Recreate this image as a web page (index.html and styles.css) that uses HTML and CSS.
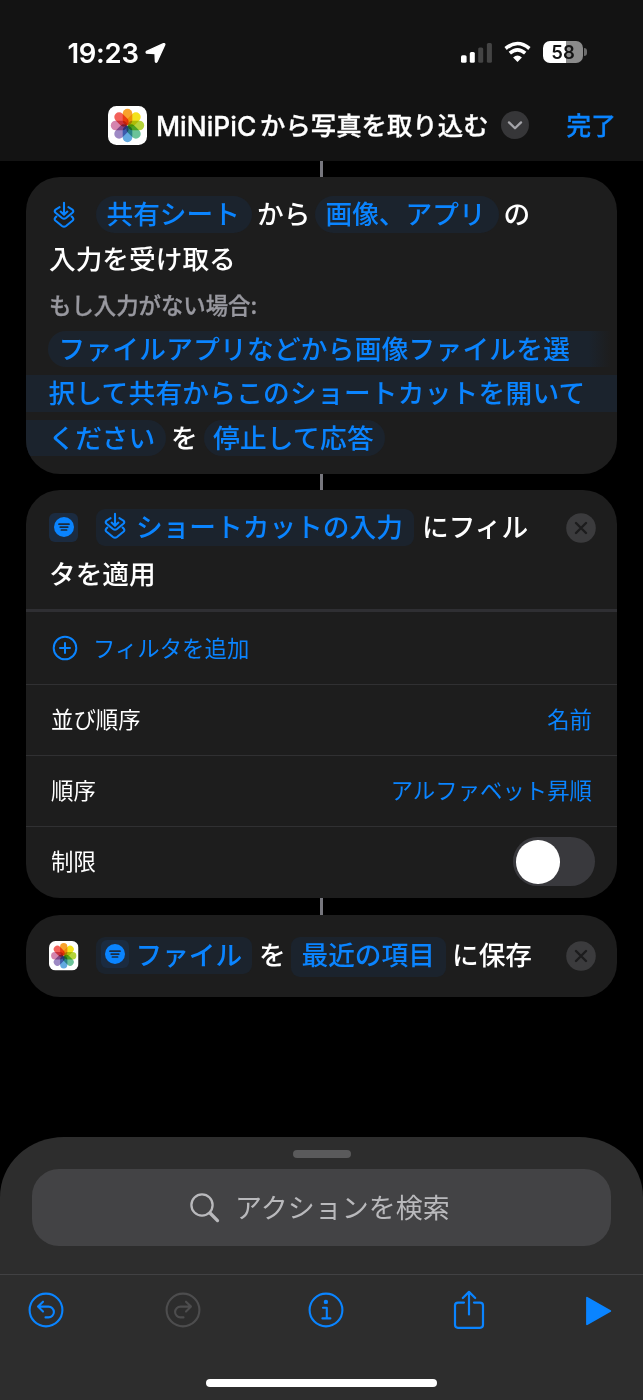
FILE: index.html
```
<!DOCTYPE html>
<html lang="ja">
<head>
<meta charset="utf-8">
<title>MiNiPiCから写真を取り込む</title>
<link rel="stylesheet" href="styles.css">
</head>
<body>
<svg class="defs" aria-hidden="true">
  <symbol id="shortcut" viewBox="0 0 22 28">
    <g fill="none" stroke="currentColor" stroke-width="2.1" stroke-linecap="round" stroke-linejoin="round">
      <path d="M11 1.8V13.4M7.6 10.6L11 13.8L14.4 10.6"/>
      <path d="M6.6 6.2L2.6 8.6Q.8 10.2 2.6 11.8L9 17Q11 18.4 13 17L19.4 11.8Q21.2 10.2 19.4 8.6L15.4 6.2"/>
      <path d="M3.4 15.6L2.4 16.6Q.8 18.2 2.6 19.8L9 25Q11 26.4 13 25L19.4 19.8Q21.2 18.2 19.6 16.6L18.6 15.6"/>
    </g>
  </symbol>
  <symbol id="filter" viewBox="0 0 20 20">
    <circle cx="10" cy="10" r="10" fill="#0a84ff"/>
    <path d="M5 7.2H15M6.2 10.1H13.8M7.4 13H12.6" stroke="#1b2b40" stroke-width="1.7" stroke-linecap="round"/>
  </symbol>
  <symbol id="close" viewBox="0 0 30 30">
    <circle cx="15" cy="15" r="14.8" fill="#3b3b3d"/>
    <path d="M10 10L20 20M20 10L10 20" stroke="#1c1c1d" stroke-width="2.4" stroke-linecap="round"/>
  </symbol>
  <symbol id="photos" viewBox="0 0 39 39">
    <rect width="39" height="39" rx="8.5" fill="#fff"/>
    <g class="petals">
      <rect x="14.7" y="2.8" width="9.6" height="16.4" rx="4.8" fill="#f8a22c"/>
      <rect x="14.7" y="2.8" width="9.6" height="16.4" rx="4.8" fill="#f4e21c" transform="rotate(45 19.5 19.5)"/>
      <rect x="14.7" y="2.8" width="9.6" height="16.4" rx="4.8" fill="#b5d43b" transform="rotate(90 19.5 19.5)"/>
      <rect x="14.7" y="2.8" width="9.6" height="16.4" rx="4.8" fill="#6bc399" transform="rotate(135 19.5 19.5)"/>
      <rect x="14.7" y="2.8" width="9.6" height="16.4" rx="4.8" fill="#62a9e0" transform="rotate(180 19.5 19.5)"/>
      <rect x="14.7" y="2.8" width="9.6" height="16.4" rx="4.8" fill="#9d89c4" transform="rotate(225 19.5 19.5)"/>
      <rect x="14.7" y="2.8" width="9.6" height="16.4" rx="4.8" fill="#d484ae" transform="rotate(270 19.5 19.5)"/>
      <rect x="14.7" y="2.8" width="9.6" height="16.4" rx="4.8" fill="#f2605a" transform="rotate(315 19.5 19.5)"/>
    </g>
  </symbol>
</svg>

<div class="screen">
  <header class="header">
    <div class="status">
      <span class="time">19:23</span>
      <svg class="location" viewBox="0 0 22 22"><path d="M20.2 1.3Q21 1.4 20.7 2.4L12.6 20Q11.6 21.3 10.9 20L10.5 11.6L1.7 11.2Q.6 10.2 1.7 9.3L19.3 1.3Q19.9 1.1 20.2 1.3Z" fill="#fff" stroke="#fff" stroke-width="1.4"/></svg>
      <svg class="signal" viewBox="0 0 32 20">
        <rect x="0" y="12.2" width="5.6" height="7.6" rx="1.6" fill="#fff"/>
        <rect x="8.8" y="9" width="5" height="10.8" rx="1.5" fill="#fff"/>
        <rect x="17.2" y="4.4" width="5" height="15.4" rx="1.5" fill="#444"/>
        <rect x="25.9" y="0" width="5" height="19.8" rx="1.5" fill="#444"/>
      </svg>
      <svg class="wifi" viewBox="0 0 27 20">
        <path d="M1.6 6.5Q13.5 -3.5 25.4 6.5" fill="none" stroke="#fff" stroke-width="3.6"/>
        <path d="M5.8 11.2Q13.5 4.6 21.2 11.2" fill="none" stroke="#fff" stroke-width="3.6"/>
        <path d="M13.5 20L9.1 15.6Q13.5 11.6 17.9 15.6Z" fill="#fff"/>
      </svg>
      <span class="battery">58</span>
      <span class="battery-tip"></span>
    </div>
    <div class="titlebar">
      <svg class="app-icon"><use href="#photos"/></svg>
      <span class="title-latin">MiNiPiC</span><span class="title-text">から写真を取り込む</span>
      <svg class="chevron" viewBox="0 0 28 28"><circle cx="14" cy="14" r="14" fill="#363638"/><path d="M8 11.4L14 17.3L20 11.4" fill="none" stroke="#a5a5aa" stroke-width="2.3" stroke-linecap="round" stroke-linejoin="round"/></svg>
      <span class="done">完了</span>
    </div>
  </header>

  <main class="flow">
    <div class="link"></div>
    <section class="card receive">
      <div class="line first">
        <svg class="glyph"><use href="#shortcut"/></svg>
        <span class="pill source">共有シート</span>
        <span class="word">から</span>
        <span class="pill kinds">画像、アプリ</span>
        <span class="word">の</span>
      </div>
      <div class="line indent">入力を受け取る</div>
      <div class="caption">もし入力がない場合:</div>
      <div class="line"><span class="pill open-end">ファイルアプリなどから画像ファイルを選</span></div>
      <div class="line"><span class="pill band">択して共有からこのショートカットを開いて</span></div>
      <div class="line">
        <span class="pill open-start">ください</span>
        <span class="word wide">を</span>
        <span class="pill answer">停止して応答</span>
      </div>
    </section>
    <div class="link"></div>
    <section class="card filter-card">
      <div class="filter-head">
        <div class="line first">
          <span class="tile"><svg><use href="#filter"/></svg></span>
          <span class="pill square input"><svg class="glyph-small"><use href="#shortcut"/></svg>ショートカットの入力</span>
          <span class="word to">にフィル</span>
          <svg class="close"><use href="#close"/></svg>
        </div>
        <div class="line indent second">タを適用</div>
      </div>
      <div class="row add">
        <svg class="plus" viewBox="0 0 26 26"><g fill="none" stroke="#0a84ff" stroke-width="2" stroke-linecap="round"><circle cx="13" cy="13" r="11.3"/><path d="M13 8V18M8 13H18"/></g></svg>
        <span class="label">フィルタを追加</span>
      </div>
      <div class="row"><span class="label">並び順序</span><span class="label value">名前</span></div>
      <div class="row"><span class="label">順序</span><span class="label value">アルファベット昇順</span></div>
      <div class="row limit"><span class="label">制限</span><span class="toggle"><span class="knob"></span></span></div>
    </section>
    <div class="link last"></div>
    <section class="card save">
      <div class="line first">
        <svg class="photo-small"><use href="#photos"/></svg>
        <span class="pill square file"><span class="tile inner"><svg><use href="#filter"/></svg></span>ファイル</span>
        <span class="word obj">を</span>
        <span class="pill square tall">最近の項目</span>
        <span class="word dest">に保存</span>
        <svg class="close"><use href="#close"/></svg>
      </div>
    </section>
  </main>

  <footer class="sheet">
    <div class="handle"></div>
    <div class="search">
      <svg class="lens" viewBox="0 0 30 30"><g fill="none" stroke="#b9b9bc"><circle cx="12" cy="12" r="10.6" stroke-width="2.3"/><path d="M20 20L27.5 27.6" stroke-width="3.3" stroke-linecap="round"/></g></svg>
      <span class="placeholder">アクションを検索</span>
    </div>
    <div class="toolbar">
      <svg class="tool undo" viewBox="0 0 36 36"><g fill="none" stroke="#0a84ff" stroke-width="2.1" stroke-linecap="round" stroke-linejoin="round"><circle cx="18" cy="18" r="16.4"/><path d="M15 9.7L10 14.6L15 19.6M10 14.6H20.5A5.4 5.4 0 0 1 20.5 25.4H17.5"/></g></svg>
      <svg class="tool redo" viewBox="0 0 36 36"><g fill="none" stroke="#4d4d4e" stroke-width="2.1" stroke-linecap="round" stroke-linejoin="round"><circle cx="18" cy="18" r="16.4"/><path d="M21 9.7L26 14.6L21 19.6M26 14.6H15.5A5.4 5.4 0 0 0 15.5 25.4H18.5"/></g></svg>
      <svg class="tool info" viewBox="0 0 36 36"><g fill="none" stroke="#0a84ff" stroke-width="2.1" stroke-linecap="round" stroke-linejoin="round"><circle cx="18" cy="18" r="16.4"/><path d="M15 15.8H18.8V26.2M14.4 26.4H22.4"/></g><circle cx="17.9" cy="9.9" r="2.2" fill="#0a84ff"/></svg>
      <svg class="share" viewBox="0 0 32 40"><g fill="none" stroke="#0a84ff" stroke-width="2.2" stroke-linecap="round" stroke-linejoin="round"><path d="M11 12.6H5Q2 12.6 2 15.6V34.8Q2 37.8 5 37.8H27Q30 37.8 30 34.8V15.6Q30 12.6 27 12.6H21"/><path d="M16 24.5V2.2M9.8 8L16 1.9L22.2 8"/></g></svg>
      <svg class="play" viewBox="0 0 26 30"><path d="M1 1.7L24.3 15L1 28.3Z" fill="#0a84ff" stroke="#0a84ff" stroke-width="1.8" stroke-linejoin="round"/></svg>
    </div>
    <div class="home"></div>
  </footer>
</div>
</body>
</html>
```
FILE: styles.css
```
* { box-sizing: border-box; }

body {
  margin: 0;
  background: #000;
  color: #fff;
  font-family: "Noto Sans CJK JP", sans-serif;
}

svg { display: block; flex: none; overflow: visible; }

.defs { position: absolute; width: 0; height: 0; }

.petals rect { mix-blend-mode: multiply; }
.petals { isolation: isolate; }

.screen {
  display: flex;
  flex-direction: column;
  width: 643px;
  height: 1400px;
  overflow: hidden;
  white-space: nowrap;
}

/* Header */
.header { flex: none; height: 161px; background: #131313; }

.status {
  display: flex;
  align-items: center;
  height: 104px;
  padding-left: 67.5px;
  font-family: Inter, sans-serif;
}

.time { width: 77.5px; padding-top: 1px; font-size: 27.5px; font-weight: 600; letter-spacing: -0.3px; }
.location { width: 21px; height: 22px; margin-top: 1px; }
.signal { width: 32px; height: 20px; margin-left: 295px; margin-top: 1px; }
.wifi { width: 27px; height: 20px; margin-left: 11px; }

.battery {
  width: 40px;
  height: 22px;
  margin-left: 12px;
  border-radius: 7px;
  background: linear-gradient(90deg, #fff 58%, #8b8b8b 58%);
  color: #131313;
  font-size: 18.5px;
  font-weight: 600;
  line-height: 23px;
  text-align: center;
}

.battery-tip {
  width: 3px;
  height: 8px;
  margin-left: 1px;
  border-radius: 0 4px 4px 0;
  background: #6b6b6b;
}

.titlebar {
  display: flex;
  align-items: center;
  height: 42px;
  padding-left: 108px;
  font-size: 25.4px;
  font-weight: 500;
}

.app-icon { width: 39px; height: 39px; }
.title-latin { width: 104px; margin-left: 9px; padding-top: 1px; font-family: Inter, sans-serif; font-size: 26.4px; font-weight: 500; -webkit-text-stroke: 0.3px; }
.title-text { width: 230px; padding-bottom: 2px; line-height: 36px; -webkit-text-stroke: 0.3px; }
.chevron { width: 28px; height: 28px; margin-left: 11px; }
.done { margin-left: 37.5px; padding-bottom: 3px; color: #0a84ff; font-size: 24.7px; line-height: 36px; -webkit-text-stroke: 0.3px; }

/* Action cards */
.flow { flex: 1; padding-left: 26px; }
.link { width: 3px; height: 16px; margin-left: 294px; background: #77777e; }
.link.last { height: 17px; }

.card {
  width: 591px;
  border-radius: 34px;
  background: #1d1d1d;
  overflow: hidden;
}

.receive { height: 297px; padding-top: 19px; }

.line {
  display: flex;
  align-items: center;
  height: 36.5px;
  margin-bottom: 8px;
  font-size: 26.7px;
  font-weight: 500;
  line-height: 36px;
}

.indent { padding: 0 0 1px 23px; }
.glyph { width: 22px; height: 28px; margin: 2px 21px 0 27px; color: #0a84ff; }

.pill {
  display: flex;
  align-items: center;
  height: 36.5px;
  padding: 0 0 2px 10.5px;
  border-radius: 19px;
  background: #1b232d;
  color: #0a84ff;
}

.source { width: 156px; }
.kinds { width: 183.5px; }
.word { width: 63px; padding: 0 0 2px 5px; }
.word.wide { width: 38px; }

.caption {
  height: 30px;
  margin: 12px 0 11.5px;
  padding-left: 23px;
  color: #98989f;
  font-size: 22.4px;
  font-weight: 500;
  line-height: 30px;
  -webkit-text-stroke: 0.3px;
}

.open-end {
  width: 569px;
  margin-left: 22px;
  border-radius: 19px 0 0 19px;
  background: linear-gradient(90deg, #1b232d 95%, #1d1d1d 99%);
  letter-spacing: 0.24px;
}

.band { width: 100%; padding-left: 22.5px; border-radius: 0; letter-spacing: 0.24px; }
.open-start { width: 140px; padding-left: 22.5px; border-radius: 0 19px 19px 0; }
.answer { width: 181px; padding-left: 9px; letter-spacing: 0.25px; }

.filter-card { height: 408px; }
.filter-head { height: 122px; padding-top: 19px; border-bottom: 3px solid #2f2f33; }

.tile {
  display: grid;
  place-items: center;
  width: 29px;
  height: 29px;
  margin: 0 18px 0 23px;
  border-radius: 6px;
  background: #1b2b40;
}

.tile svg { width: 20px; height: 20px; }
.square { border-radius: 9px; }
.input { width: 318px; padding-left: 8px; }
.glyph-small { width: 22px; height: 28px; margin-right: 10px; }
.to { width: 152px; padding-left: 8px; }
.close { width: 30px; height: 30px; margin-top: 2px; }
.second { margin-top: 10px; }

.row {
  display: flex;
  align-items: center;
  justify-content: space-between;
  height: 71px;
  padding: 0 25px;
  border-top: 1px solid #303032;
  font-size: 22.4px;
  line-height: 32px;
}

.label { padding-bottom: 4px; }
.add { justify-content: flex-start; height: 72px; border-top: 0; color: #0a84ff; }
.add .label { padding-bottom: 3px; }
.plus { width: 26px; height: 26px; margin: 0 15px 0 1px; }
.value { color: #0a84ff; }
.limit { padding-right: 22px; }

.toggle {
  width: 82px;
  height: 49px;
  margin-bottom: 1px;
  padding: 3px;
  border-radius: 25px;
  background: #39393d;
}

.knob { display: block; width: 43.5px; height: 43.5px; border-radius: 50%; background: #fff; }

.save { height: 82px; padding-top: 22px; }
.photo-small { width: 29.5px; height: 29.5px; margin: 0 17.5px 0 23px; }
.file { width: 156px; padding-left: 5px; }
.tile.inner { width: 28px; height: 28px; margin: 0 6.5px 0 0; }
.obj { width: 39px; padding-left: 7px; }
.tall { width: 155px; height: 39.5px; margin-top: 3px; padding-bottom: 5px; }
.dest { width: 119.5px; padding-left: 6px; }

/* Bottom sheet */
.sheet {
  display: flex;
  flex-direction: column;
  align-items: center;
  flex: none;
  height: 263px;
  border-radius: 64px 64px 0 0 / 60px 60px 0 0;
  background: #2d2d2d;
}

.handle { width: 58px; height: 8px; margin-top: 13px; border-radius: 4px; background: #5a5a5b; }

.search {
  display: flex;
  align-items: center;
  width: 579px;
  height: 77px;
  margin-top: 11px;
  padding-left: 157.5px;
  border-radius: 27px;
  background: #434345;
  color: #b9b9bc;
  font-size: 27px;
  line-height: 36px;
}

.placeholder { padding-bottom: 2px; }
.lens { width: 30px; height: 30px; margin-right: 15.5px; }

.toolbar {
  display: flex;
  align-items: center;
  width: 643px;
  height: 72px;
  margin-top: 28px;
  padding: 0 0 2px 28px;
  border-top: 1px solid #414143;
}

.tool { width: 36px; height: 36px; }
.redo { margin-left: 100.5px; }
.info { margin-left: 107px; }
.share { width: 32px; height: 40px; margin: 0 101px 0 109px; }
.play { width: 26px; height: 30px; margin-top: 2px; }

.home { width: 231px; height: 8px; margin-top: 33px; border-radius: 4px; background: #fff; }
```
